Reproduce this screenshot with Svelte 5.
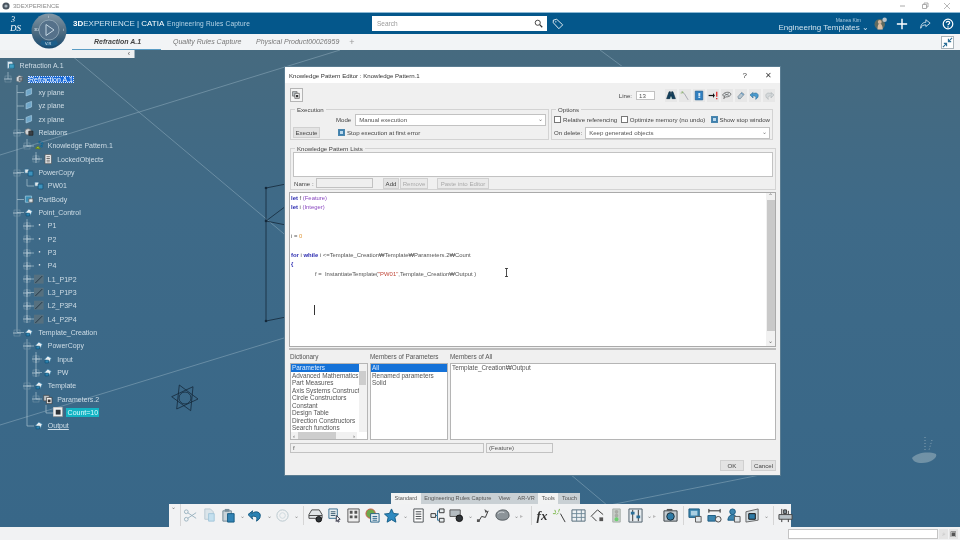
<script>
  // small helper, icons are lists of [path, fill, stroke]
  const circle = (x, y, r) => `M${x - r} ${y}a${r} ${r} 0 1 0 ${r * 2} 0a${r} ${r} 0 1 0 ${-r * 2} 0z`;

  const icons = {
    product: [['M2 2h6l2 2v8H2z', '#dfe8ee', '#5d8aa6'], ['M5 6h7v6H5z', '#3f9fc4', '#18607f']],
    part: [['M2 5l4-3 5 2v5l-4 3-5-2z', '#d8dde0', '#6c7278'], ['M6 5h5v5H6z', '#88939b', '#454c52']],
    plane: [['M3 5l8-3v8l-8 3z', '#6fa6c8', '#a4cbe2']],
    rel: [[circle(6, 7, 4.5), '#d3d6d8', '#777'], ['M7 6h6v6H7z', '#3a4046', '#222']],
    kp: [['M2 12l4-3 3 4z', '#a5c53a', '#5f7c10'], ['M7 2h2v2H7zM11 4h2v2h-2zM10 8h2v2h-2z', '#2d8fc4', '#0d5f8a']],
    doc: [['M3 1h9v13H3z', '#fff', '#555'], ['M5 4h5M5 6.5h5M5 9h5M5 11.5h5', 'none', '#222']],
    copy: [['M1 3h6v6H1z', '#dfe6ea', '#2c6a90'], ['M6 6h7v7H6z', '#3d92bd', '#144f72']],
    body: [['M2 3h9v9H2z', '#3c8fb6', '#a9d4e8'], ['M7 7h6v5H7z', '#e2e6e8', '#555']],
    geo: [['M2 8l5-5 5 3-3 6z', '#e8edf0', '#3b7fa8'], ['M3 9h5v4H3z', '#2d84b1', '#0e5076']],
    dot: [['M7 6h2v2H7z', '#eef2f4', 'none']],
    line: [['M0 1h14v13H0z', '#56707f', 'none'], ['M2 13L12 3', 'none', '#10202c']],
    param: [['M1 2h8v8H1z', '#bfc6ca', '#444'], ['M5 5h8v9H5z', '#eee', '#333'], ['M7 8h4v4H7z', '#333', 'none']],
    count: [['M0 0h14v14H0z', '#eceff0', '#888'], ['M4 4h7v7H4z', '#2d3338', 'none']]
  };

  const tools = {
    scissors: [[circle(3.5, 4, 2) + circle(3.5, 12, 2), 'none', '#9ab2bf'], ['M5 5l9 6M5 11l9-6', 'none', '#9ab2bf']],
    copy: [['M3 1h6l3 3v8H3z', '#dbe5ea', '#b9c9d2'], ['M7 6h6v8H7z', '#c4e0ef', '#a3c6da']],
    paste: [['M2 3h9v11H2z', '#c9d3d9', '#6f8794'], ['M4 1h5v3H4z', '#788e9a', 'none'], ['M7 6h7v9H7z', '#3283b4', '#135980']],
    undo: [['M4 6c5-4 10-1 9 3 0 2-2 4-4 5 1-3 1-6-5-5l1 3-5-5 5-4z', '#2a82b3', '#12567e']],
    gear: [[circle(8, 8, 6), 'none', '#b8c6cd'], [circle(8, 8, 3), 'none', '#ced9de']],
    disk: [['M1 7l3-5h8l3 5v4H1z', '#e1e5e7', '#444'], ['M1 8h14', 'none', '#444'], [circle(11.5, 12, 3), '#2f3438', '#111']],
    listArrow: [['M2 1h9v10H2z', '#e8eef1', '#3b6f90'], ['M4 4h5M4 6h5M4 8h5', 'none', '#34566c'], ['M10 8l4 4-2 .5 1 2-1.2.5-1-2-1 1.4z', '#fff', '#334']],
    grid: [['M2 1h12v14H2z', '#eee', '#555'], ['M4 3h3v3H4zM9 3h3v3H9zM4 8h3v3H4zM9 8h3v3H9z', '#555', 'none']],
    globe: [[circle(6, 6, 5), '#6ea84b', '#d0574a'], ['M6 6h9v9H6z', '#eef2f4', '#1f5e85'], ['M8 9h5M8 11h5M8 13h5', 'none', '#1f5e85']],
    star: [['M8 1l2.2 4.8 5.3.6-3.9 3.5 1.1 5.2L8 12.4 3.3 15.1l1.1-5.2L.5 6.4l5.3-.6z', '#2e8ac0', '#145d86']],
    page: [['M3 1h10v14H3z', '#fff', '#4a4f52'], ['M5 4h6M5 6.5h6M5 9h6M5 11.5h6', 'none', '#3a3f42']],
    tree: [['M10 1h5v4h-5zM1 6h5v4H1zM10 11h5v4h-5z', '#e8edef', '#333'], ['M6 8h2V3h2M8 8v5h2', 'none', '#2a6f98']],
    screenGear: [['M1 2h11v7H1z', '#b4bcc1', '#555'], [circle(11, 11, 3.5), '#2f3438', '#111']],
    poly: [['M3 14l3-5 4 1 3-7', 'none', '#333'], ['M9 1l1 4 3-1zM1 12h3v3H1z', '#555', 'none']],
    sphere: [['M1 8c0-4 4-6 8-6s6 3 6 6-3 5-7 5-7-2-7-5z', '#8c9499', '#4d5459'], ['M3 6c2-2 5-2 7-1', 'none', '#d4d9dc']],
    wand: [['M9 6l5 9', 'none', '#333'], ['M3 2l1 3M8 1L7 4M1 6l3 0M5 7l2-2', 'none', '#7ab648']],
    table: [['M1 2h14v12H1z', '#eef2f4', '#506776'], ['M1 6h14M1 10h14M6 2v12M11 2v12', 'none', '#6d8797']],
    shape: [['M1 9l7-7 6 5', 'none', '#333'], ['M2 9l5 5', 'none', '#333'], ['M10 10h4v4h-4z', '#555', 'none']],
    light: [['M4 1h8v14H4z', '#c8cec9', '#a9b0ab'], [circle(8, 4, 2) + circle(8, 8, 2), '#a9aca6', 'none'], [circle(8, 12, 2.2), '#6ccf70', 'none']],
    slider: [['M1 1h14v14H1z', '#e6ebee', '#4a5c68'], ['M5 2v12M11 2v12', 'none', '#333'], ['M3 4h4v3H3zM9 8h4v3H9z', '#2a6f98', 'none']],
    camera: [['M1 3h14v11H1z', '#c3cbd0', '#3b4145'], [circle(8, 9, 4), '#2f7ba6', '#1a2a33'], ['M4 1h6v2H4z', '#555', 'none']],
    panel: [['M1 1h11v9H1z', '#3c85ae', '#1a5a80'], ['M3 3h7v5H3z', '#a9cfe2', 'none'], ['M8 9h6v6H8z', '#dfe5e8', '#555']],
    measure: [['M2 3h12M2 1v4M14 1v4', 'none', '#222'], ['M1 8h8v6H1z', '#3c85ae', '#1a5a80'], [circle(12, 12, 3), '#eee', '#444']],
    people: [[circle(7, 4, 3), '#3c85ae', '#1a5a80'], ['M2 13c0-4 3-6 5-6s5 2 5 6z', '#3c85ae', '#1a5a80'], ['M9 9h6v6H9z', '#dfe5e8', '#555']],
    frame: [['M1 4l13-3v12L1 15z', '#d5dde1', '#666'], ['M4 6h7v6H4z', '#2f7ba6', '#111']],
    rig: [['M4 1v14M11 3v12', 'none', '#333'], ['M1 7h14v5H1z', '#b9c2c7', '#444'], ['M6 2h3v4H6z', '#7b8a93', '#333']]
  };

  const toolbar = [
    'scissors', 'copy', 'paste', '|caret', 'undo', '|caret', 'gear', '|caret', '|sep',
    'disk', 'listArrow', 'grid', 'globe', 'star', '|caret', 'page', 'tree', 'screenGear', '|caret',
    'poly', 'sphere', '|caret', '|more', '|sep', '|fx', 'wand', 'table', 'shape', 'light', 'slider', '|caret', '|more',
    'camera', '|sep', 'panel', 'measure', 'people', 'frame', '|caret', '|sep', 'rig'
  ];

  const tree = [
    { label: 'Refraction A.1', depth: -1, icon: 'product' },
    { label: 'Refraction A.1', depth: 0, icon: 'part', exp: '-', selected: true },
    { label: 'xy plane', depth: 1, icon: 'plane' },
    { label: 'yz plane', depth: 1, icon: 'plane' },
    { label: 'zx plane', depth: 1, icon: 'plane' },
    { label: 'Relations', depth: 1, icon: 'rel', exp: '-' },
    { label: 'Knowledge Pattern.1', depth: 2, icon: 'kp', exp: '-' },
    { label: 'LockedObjects', depth: 3, icon: 'doc', exp: '+' },
    { label: 'PowerCopy', depth: 1, icon: 'copy', exp: '-' },
    { label: 'PW01', depth: 2, icon: 'copy' },
    { label: 'PartBody', depth: 1, icon: 'body' },
    { label: 'Point_Control', depth: 1, icon: 'geo', exp: '-' },
    { label: 'P1', depth: 2, icon: 'dot', exp: '+' },
    { label: 'P2', depth: 2, icon: 'dot', exp: '+' },
    { label: 'P3', depth: 2, icon: 'dot', exp: '+' },
    { label: 'P4', depth: 2, icon: 'dot', exp: '+' },
    { label: 'L1_P1P2', depth: 2, icon: 'line', exp: '+' },
    { label: 'L3_P1P3', depth: 2, icon: 'line', exp: '+' },
    { label: 'L2_P3P4', depth: 2, icon: 'line', exp: '+' },
    { label: 'L4_P2P4', depth: 2, icon: 'line', exp: '+' },
    { label: 'Template_Creation', depth: 1, icon: 'geo', exp: '-' },
    { label: 'PowerCopy', depth: 2, icon: 'geo', exp: '-' },
    { label: 'Input', depth: 3, icon: 'geo', exp: '+' },
    { label: 'PW', depth: 3, icon: 'geo', exp: '+' },
    { label: 'Template', depth: 2, icon: 'geo', exp: '-' },
    { label: 'Parameters.2', depth: 3, icon: 'param', exp: '-' },
    { label: 'Count=10', depth: 4, icon: 'count', active: true },
    { label: 'Output', depth: 2, icon: 'geo', underline: true }
  ];

  const connectors =
    'M8 72v7 M17 85v247 M17 92.5h7M17 106h7M17 119.5h7M17 132.5h7M17 172.5h7M17 199.5h7M17 212.5h7M17 332.5h7 ' +
    'M27 139v7h7 M27 179v7h7 M27 219v100 M27 226h7M27 239h7M27 253h7M27 266h7M27 279h7M27 292.5h7M27 306h7M27 319h7 ' +
    'M27 339v87h7 M27 346h7M27 386h7 M36 152v7h6 M36 352v20 M36 359h6M36 372.5h6 M36 392v7h6 M46 405v8h7';

  // the list clips these two names in the original, so they are written as shown
  const dictionary = ['Parameters', 'Advanced Mathematics F', 'Part Measures', 'Axis Systems Constructor', 'Circle Constructors', 'Constant', 'Design Table', 'Direction Constructors', 'Search functions'];
  const members = ['All', 'Renamed parameters', 'Solid'];

  const editorTools = [
    [['M1 13l4-11h2l1 5 1-5h2l4 11h-5l-1-4h-2l-1 4z', '#123f5c', '#0d2c40'], ['M7 12h2', 'none', '#3aa']],
    [['M2 2l5 3 6 10', 'none', '#889'], ['M4 1l1 3M1 4h3', 'none', '#7ab648']],
    [['M2 1h12v14H2z', '#2f7fc1', '#1a5a8e'], ['M7 4h3v5H7zM7 10h3v2H7z', '#d7e9f5', 'none']],
    [['M1 7h8v2H1z', '#111', 'none'], ['M8 4l3 4-3 4z', '#111', 'none'], ['M13 2h2v8h-2zM13 12h2v2h-2z', '#d22', 'none']],
    [['M1 7c2-4 10-6 13-2 1 3-4 6-8 5l-3 3 1-4c-2 0-3-1-3-2z', '#e8ecee', '#333'], ['M4 5l7 3M4 8l7-3', 'none', '#555']],
    [['M3 10l6-7 4 3-6 7H4z', '#b7c7d2', '#5e7786'], ['M8 4l4 3', 'none', '#2f7fc1']],
    [['M4 6c5-4 10-1 9 3 0 2-2 4-4 5 1-3 1-6-5-5l1 3-5-5 5-4z', '#4b9bd0', '#2a6f98']],
    [['M12 6C7 2 2 5 3 9c0 2 2 4 4 5-1-3-1-6 5-5l-1 3 5-5-5-4z', '#d4d8da', '#aeb4b7']]
  ];
</script>

{#snippet glyph(parts)}
  <svg class="glyph" viewBox="0 0 16 16">
    {#each parts as p}
      <path d={p[0]} fill={p[1]} stroke={p[2]} stroke-width="1" />
    {/each}
  </svg>
{/snippet}

<div class="app">
  <div class="titlebar">
    <svg class="app-ico" viewBox="0 0 10 10"><circle cx="5" cy="5" r="4.5" fill="#4a5560" /><circle cx="5" cy="5" r="2" fill="#a8b4bc" /></svg>
    <span class="app-name">3DEXPERIENCE</span>
    <div class="win-btns">
      <svg viewBox="0 0 8 8"><path d="M1 4h5" stroke="#aaa" fill="none" /></svg>
      <svg viewBox="0 0 8 8"><path d="M1.5 2.5h4v4h-4zM3 2.5V1h4v4H5.5" stroke="#999" fill="none" stroke-width=".8" /></svg>
      <svg viewBox="0 0 8 8"><path d="M1 1l6 6M7 1L1 7" stroke="#999" fill="none" stroke-width=".7" /></svg>
    </div>
  </div>

  <header class="bar">
    <span class="ds-logo"><span>3</span><span class="ds">DS</span></span>
    <div class="brand"><b>3D</b>EXPERIENCE | <b class="catia">CATIA</b> <span class="app-title">Engineering Rules Capture</span></div>
    <div class="search">
      <span>Search</span>
      <svg viewBox="0 0 12 12"><circle cx="5" cy="5" r="3.4" fill="none" stroke="#333" stroke-width="1.2" /><path d="M7.6 7.6L11 11" stroke="#333" stroke-width="1.6" /></svg>
    </div>
    <svg class="tag" viewBox="0 0 14 14"><path d="M1.5 2.5l4-1 7 6.5-4.5 4.5-6.5-7z" fill="none" stroke="#fff" stroke-width="1" /><circle cx="4.5" cy="4.5" r=".8" fill="#fff" /></svg>
    <div class="user">
      <span class="user-name">Manea Kim</span>
      <span class="user-space">Engineering Templates ⌄</span>
    </div>
    <svg class="avatar" viewBox="0 0 20 20">
      <circle cx="9" cy="11" r="7" fill="#5e6a60" />
      <path d="M6 18c0-5 1-8 3-8s4 3 4 8z" fill="#d8bda2" />
      <circle cx="9" cy="8" r="2.6" fill="#d3b79c" />
      <circle cx="15.5" cy="5" r="3" fill="#b7c3cb" />
    </svg>
    <svg class="act plus" viewBox="0 0 14 14"><path d="M7 1v12M1 7h12" stroke="#fff" stroke-width="1.7" /></svg>
    <svg class="act" viewBox="0 0 14 14"><path d="M8 2l5 4-5 4V8C5 8 3 9 2 12c0-4 2-7 6-7z" fill="none" stroke="#dfe9f0" stroke-width="1" /></svg>
    <svg class="act last" viewBox="0 0 14 14"><circle cx="7" cy="7" r="5.6" fill="none" stroke="#fff" stroke-width="1.4" /><path d="M5 5.5C5 3.5 9 3.5 9 5.5 9 7 7 7 7 8.5" fill="none" stroke="#fff" stroke-width="1.4" /><circle cx="7" cy="10.4" r=".9" fill="#fff" /></svg>
  </header>

  <nav class="tabs">
    <span class="tab active">Refraction A.1</span>
    <span class="tab quality">Quality Rules Capture</span>
    <span class="tab physical">Physical Product00026959</span>
    <span class="tab-add">+</span>
    <span class="collapse">
      <svg viewBox="0 0 12 12"><path d="M11 1L7.5 4.5M7 2v3h3M1 11l3.5-3.5M5 10V7H2" fill="none" stroke="#2b6f97" stroke-width="1.2" /></svg>
    </span>
  </nav>

  <!-- the compass sits over the header and the tab strip -->
  <div class="compass">
    <svg viewBox="0 0 36 36">
      <defs>
        <linearGradient id="ring" x1="0" y1="0" x2="0" y2="1">
          <stop offset="0" stop-color="#8297a6" />
          <stop offset=".55" stop-color="#4c6a80" />
          <stop offset="1" stop-color="#174a70" />
        </linearGradient>
      </defs>
      <circle cx="18" cy="18" r="17.5" fill="url(#ring)" />
      <circle cx="18" cy="17" r="10" fill="#55718a" stroke="#9fb3c1" stroke-width=".7" />
      <path d="M15 11.5l8 5.5-8 5.5z" fill="none" stroke="#c4d6e2" stroke-width="1" />
      <path d="M9 31c5 3 13 3 18 0l-2-4c-4 2-10 2-14 0z" fill="#1d5e8a" />
    </svg>
    <span class="c-t">i</span>
    <span class="c-l">3D</span>
    <span class="c-r">i</span>
    <span class="c-b">V.R</span>
  </div>

  <main class="viewport">
    <svg class="scene" viewBox="0 50 960 478">
      <g stroke="#9db8c8" stroke-width=".6" fill="none" opacity=".75">
        <path d="M0 155L340 50" />
        <path d="M65 50L620 516" />
        <path d="M0 425L284 338" />
        <path d="M600 50L770 176" />
        <path d="M600 507L770 473" />
      </g>
      <g stroke="#14283a" stroke-width=".8" fill="none">
        <path d="M266 188V321" />
        <path d="M266 188L286 184M266 221L286 206M266 221L286 225M266 321L286 317" />
        <path d="M179.3 385L198 399L176.7 409zM193 386.7L190.7 410.7L171.7 396.7z" />
        <circle cx="185" cy="398" r="6" />
      </g>
      <g fill="#14283a"><circle cx="266" cy="188" r="1.3" /><circle cx="266" cy="221" r="1.3" /><circle cx="266" cy="321" r="1.3" /></g>
      <g>
        <path d="M912 458c4-5 16-7 24-4 2 4-6 9-14 9-6 0-9-2-10-5z" fill="#9fb4bf" opacity=".55" />
        <path d="M925 437v14M932 440l-3 10" stroke="#86a2b2" stroke-width="1" stroke-dasharray="1 2" />
      </g>
    </svg>

    <div class="tree-head"><span>‹</span></div>

    <section class="tree">
      <svg class="connectors" viewBox="0 50 140 400"><path d={connectors} fill="none" stroke="#a9c1cf" stroke-width=".7" /></svg>
      {#each tree as node}
        <div class="row" style="margin-left:{4 + 9.4 * node.depth}px">
          <span class="exp">
            {#if node.exp}
              <svg viewBox="0 0 8 8"><path d={node.exp === '+' ? 'M0 4h8M4 0v8' : 'M0 4h8'} stroke="#b6cad6" stroke-width=".9" /><rect x="1" y="1" width="6" height="6" fill="none" stroke="#7f9cad" stroke-width=".5" /></svg>
            {/if}
          </span>
          <span class="ico">{@render glyph(icons[node.icon])}</span>
          <span class="lbl" class:selected={node.selected} class:active={node.active} class:under={node.underline}>{node.label}</span>
        </div>
      {/each}
    </section>

    <section class="dialog">
      <div class="dlg-title">
        <span>Knowledge Pattern Editor : Knowledge Pattern.1</span>
        <span class="q">?</span>
        <span class="x">✕</span>
      </div>

      <div class="dlg-body">
        <div class="top-row">
          <span class="square-btn">{@render glyph(icons.param)}</span>
          <span class="line-lbl">Line:</span>
          <span class="field line-val">13</span>
          <div class="ed-tools">
            {#each editorTools as parts}
              <span>{@render glyph(parts)}</span>
            {/each}
          </div>
        </div>

        <div class="groups">
          <fieldset class="exec">
            <legend>Execution</legend>
            <div class="exec-row mode">
              <span>Mode</span>
              <span class="field select">Manual execution<i>⌄</i></span>
            </div>
            <div class="exec-row">
              <span class="btn">Execute</span>
              <span class="check on"></span>
              <span>Stop execution at first error</span>
            </div>
          </fieldset>
          <fieldset class="opts">
            <legend>Options</legend>
            <div class="opt-row">
              <span class="check"></span><span class="o1">Relative referencing</span>
              <span class="check"></span><span class="o2">Optimize memory (no undo)</span>
              <span class="check on"></span><span>Show stop window</span>
            </div>
            <div class="opt-row del">
              <span>On delete:</span>
              <span class="field select">Keep generated objects<i>⌄</i></span>
            </div>
          </fieldset>
        </div>

        <fieldset class="lists">
          <legend>Knowledge Pattern Lists</legend>
          <div class="field list-box"></div>
          <div class="name-row">
            <span class="name-lbl">Name :</span>
            <span class="field name-in"></span>
            <span class="btn add">Add</span>
            <span class="btn off remove">Remove</span>
            <span class="btn off paste">Paste into Editor</span>
          </div>
        </fieldset>

        <div class="editor">
          <div class="code">
            <div class="ln"><b>let</b> f <em>(Feature)</em></div>
            <div class="ln"><b>let</b> i <em>(Integer)</em></div>
            <div class="ln">&nbsp;</div>
            <div class="ln">&nbsp;</div>
            <div class="ln">i = <u>0</u></div>
            <div class="ln">&nbsp;</div>
            <div class="ln"><b>for</b> i <b>while</b> i &lt;=Template_Creation₩Template₩Parameters.2₩Count</div>
            <div class="ln"><b>{'{'}</b></div>
            <div class="ln ind">f =&nbsp; InstantiateTemplate(<s>"PW01"</s>,Template_Creation₩Output )</div>
            <span class="caret"></span>
            <svg class="ibeam" viewBox="0 0 5 9"><path d="M1 .5h3M1 8.5h3M2.5 .5v8" stroke="#222" stroke-width=".8" fill="none" /></svg>
          </div>
          <div class="vscroll">
            <span class="arr">⌃</span>
            <span class="thumb"></span>
            <span class="arr">⌄</span>
          </div>
        </div>

        <div class="splitter"></div>

        <div class="dict">
          <div class="dcol">
            <span class="cap">Dictionary</span>
            <div class="field dlist">
              <div class="dscroll">
                <div class="items">
                  {#each dictionary as item, i}
                    <div class="item" class:sel={i === 0}>{item}</div>
                  {/each}
                </div>
                <div class="sb-v"><span class="sb-thumb"></span></div>
              </div>
              <div class="sb-h"><span>‹</span><i></i><span>›</span></div>
            </div>
          </div>
          <div class="dcol">
            <span class="cap">Members of Parameters</span>
            <div class="field dlist">
              <div class="items">
                {#each members as item, i}
                  <div class="item" class:sel={i === 0}>{item}</div>
                {/each}
              </div>
            </div>
          </div>
          <div class="dcol">
            <span class="cap">Members of All</span>
            <div class="field dlist">
              <div class="items"><div class="item">Template_Creation₩Output</div></div>
            </div>
          </div>
        </div>

        <div class="type-row">
          <span class="field grey f-in">f</span>
          <span class="field grey f-type">(Feature)</span>
        </div>

        <div class="foot">
          <span class="btn ok">OK</span>
          <span class="btn cancel">Cancel</span>
        </div>
      </div>
    </section>

    <div class="dock">
      <div class="dock-tabs">
        <span class="on">Standard</span>
        <span>Engineering Rules Capture</span>
        <span>View</span>
        <span>AR-VR</span>
        <span class="on">Tools</span>
        <span>Touch</span>
      </div>
      <div class="dock-bar">
        <span class="grip">⌄</span>
        {#each toolbar as t}
          {#if t === '|caret'}
            <span class="t-caret">⌄</span>
          {:else if t === '|sep'}
            <span class="t-sep"></span>
          {:else if t === '|more'}
            <span class="t-more">▸</span>
          {:else if t === '|fx'}
            <span class="t-fx">fx</span>
          {:else}
            <span class="t-ico">{@render glyph(tools[t])}</span>
          {/if}
        {/each}
      </div>
    </div>
  </main>

  <footer class="status">
    <span class="cmd"></span>
    <span class="cmd-btn">⌕</span>
    <span class="cmd-btn dark">▣</span>
  </footer>
</div>

<style>
  :global(body) {
    margin: 0;
    background: #3f6a85;
  }

  .app {
    position: relative;
    width: 960px;
    height: 540px;
    display: flex;
    flex-direction: column;
    overflow: hidden;
    font-family: "Liberation Sans", Arial, sans-serif;
    filter: blur(0.3px);
  }

  .titlebar {
    height: 12px;
    background: #fff;
    display: flex;
    align-items: center;
    padding-left: 2px;
    border-bottom: 1px solid #8db9d4;
  }

  .app-ico {
    width: 8px;
    height: 8px;
  }

  .app-name {
    margin-left: 3px;
    font-size: 6px;
    color: #8a8a8a;
  }

  .win-btns {
    margin-left: auto;
    display: flex;
    gap: 14px;
    padding-right: 9px;
  }

  .win-btns svg {
    width: 8px;
    height: 8px;
  }

  .bar {
    height: 21px;
    background: #04578b;
    display: flex;
    align-items: center;
    color: #fff;
  }

  .ds-logo {
    width: 73px;
    padding-left: 11px;
    box-sizing: border-box;
    display: flex;
    flex-direction: column;
    font: italic 8px/8px "Liberation Serif", serif;
  }

  .ds {
    margin-left: -1px;
    font-size: 9px;
  }

  .brand {
    width: 299px;
    font-size: 8px;
    color: #cfe2ee;
    white-space: nowrap;
  }

  .brand b {
    color: #fff;
  }

  .brand .catia {
    font-weight: 400;
  }

  .app-title {
    font-size: 6.6px;
    color: #b7d4e6;
    margin-left: 1px;
    letter-spacing: 0.15px;
  }

  .search {
    width: 175px;
    height: 15px;
    background: #fff;
    display: flex;
    align-items: center;
    justify-content: space-between;
    padding: 0 4px 0 5px;
    box-sizing: border-box;
    font-size: 6.5px;
    color: #9a9a9a;
  }

  .search svg {
    width: 9px;
    height: 9px;
  }

  .tag {
    width: 12px;
    height: 12px;
    margin-left: 5px;
  }

  .user {
    margin-left: auto;
    display: flex;
    flex-direction: column;
    align-items: flex-end;
    line-height: 8px;
  }

  .user-name {
    font-size: 5px;
    color: #a8c8dc;
    margin-right: 8px;
  }

  .user-space {
    font-size: 8px;
    color: #cfe2ee;
  }

  .avatar {
    width: 15px;
    height: 15px;
    margin-left: 4px;
  }

  .act {
    width: 12px;
    height: 12px;
    margin-left: 11px;
  }

  .act.plus {
    margin-left: 8px;
  }

  .act.last {
    margin-right: 6px;
  }

  .tabs {
    height: 16px;
    background: #f2f4f6;
    position: relative;
    display: flex;
    align-items: center;
    font-size: 7px;
    font-style: italic;
    color: #777;
    white-space: nowrap;
  }

  .tab {
    height: 16px;
    line-height: 15px;
    box-sizing: border-box;
  }

  .tab.active {
    margin-left: 72px;
    width: 89px;
    padding-left: 22px;
    font-weight: 700;
    color: #444;
    border-bottom: 1.5px solid #5a9cc4;
  }

  .tab.quality {
    margin-left: 12px;
    width: 83px;
  }

  .tab-add {
    margin-left: 10px;
    font-size: 9px;
    font-style: normal;
    color: #999;
  }

  .collapse {
    margin-left: auto;
    margin-right: 6px;
    width: 11px;
    height: 11px;
    border: 1px solid #a9b4ba;
    background: #fff;
    display: flex;
  }

  .compass {
    position: absolute;
    left: 31px;
    top: 13px;
    width: 36px;
    height: 36px;
    font-size: 4px;
    color: #dde8ef;
    line-height: 4px;
  }

  .compass svg {
    display: block;
    width: 36px;
    height: 36px;
  }

  .c-t, .c-l, .c-r, .c-b {
    position: absolute;
  }

  .c-t { left: 17px; top: 2px; }
  .c-l { left: 3px; top: 15px; }
  .c-r { right: 3px; top: 15px; }
  .c-b { left: 14px; top: 29px; }

  .viewport {
    position: relative;
    flex: 1;
    background: linear-gradient(#466a7f, #3e6a88 35%, #386788);
  }

  .scene {
    position: absolute;
    inset: 0;
    width: 960px;
    height: 478px;
  }

  .tree-head {
    position: absolute;
    left: 0;
    top: 0;
    width: 134px;
    height: 8px;
    background: #eef0f1;
    text-align: right;
    font-size: 7px;
    line-height: 8px;
    color: #555;
    border-right: 1px solid #9fb0ba;
  }

  .tree-head span {
    margin-right: 4px;
  }

  .tree {
    position: absolute;
    left: 0;
    top: 9.3px;
    width: 140px;
    color: #cfdde6;
    font-size: 7px;
  }

  .connectors {
    position: absolute;
    left: 0;
    top: -9.3px;
    width: 140px;
    height: 400px;
  }

  .row {
    position: relative;
    height: 13.33px;
    display: flex;
    align-items: center;
    white-space: nowrap;
  }

  .exp {
    width: 8px;
    height: 8px;
    margin-right: 3px;
    flex: none;
  }

  .exp svg {
    display: block;
    width: 8px;
    height: 8px;
  }

  .ico {
    width: 11px;
    height: 11px;
    flex: none;
    margin-right: 2px;
  }

  .glyph {
    display: block;
    width: 100%;
    height: 100%;
  }

  .lbl {
    padding: 0 1px;
  }

  .lbl.selected {
    background: #1467d6;
    color: #fff;
    outline: 1px dotted #d8e6ff;
    outline-offset: -1px;
  }

  .lbl.active {
    background: #14b4c4;
    color: #d9fbff;
    padding: 1px 1px 1px 2px;
  }

  .lbl.under {
    text-decoration: underline;
  }

  .dialog {
    position: absolute;
    left: 285px;
    top: 17px;
    width: 495px;
    height: 408px;
    background: #f0f0f0;
    box-shadow: 0 0 0 1px #5b7d92;
    display: flex;
    flex-direction: column;
    color: #444;
    font-size: 6.1px;
  }

  .dlg-title {
    height: 16px;
    background: #fff;
    display: flex;
    align-items: center;
    padding-left: 4px;
    font-size: 6.1px;
    color: #333;
  }

  .q {
    margin-left: auto;
    font-size: 8px;
  }

  .x {
    margin: 0 8px 0 18px;
    font-size: 7.5px;
    color: #444;
  }

  .dlg-body {
    flex: 1;
    padding: 0 4px 0 5px;
    position: relative;
  }

  .top-row {
    height: 24px;
    display: flex;
    align-items: center;
  }

  .square-btn {
    width: 13px;
    height: 14px;
    border: 1px solid #b5b5b5;
    box-sizing: border-box;
    background: #f5f5f5;
    padding: 1px;
  }

  .line-lbl {
    margin-left: auto;
    margin-right: 4px;
  }

  .line-val {
    width: 19px;
    height: 9px;
    line-height: 8px;
    padding-left: 2px;
    box-sizing: content-box;
    margin-right: 10px;
  }

  .ed-tools {
    display: flex;
    margin-right: -1px;
    margin-top: 1px;
  }

  .ed-tools span {
    width: 12px;
    height: 13px;
    padding: 1px 1px;
    box-sizing: border-box;
    margin-right: 2px;
    background: #e7e7e7;
  }

  .field {
    background: #fff;
    border: 1px solid #c2c2c2;
    box-sizing: border-box;
    display: block;
    color: #555;
  }

  .field.grey {
    background: #f0f0f0;
  }

  .select {
    flex: 1;
    height: 12px;
    line-height: 10px;
    padding-left: 3px;
    position: relative;
  }

  .select i {
    position: absolute;
    right: 2px;
    top: -1px;
    font-style: normal;
    color: #777;
  }

  fieldset {
    margin: 0;
    padding: 1px 2px 0;
    border: 1px solid #d3d3d3;
    min-width: 0;
  }

  legend {
    padding: 0 2px;
    margin-left: 2px;
    font-size: 6.1px;
    line-height: 5px;
  }

  .groups {
    display: flex;
    gap: 2px;
    height: 33px;
  }

  .exec {
    width: 259px;
    box-sizing: border-box;
  }

  .opts {
    width: 222px;
    box-sizing: border-box;
  }

  .exec-row {
    display: flex;
    align-items: center;
    height: 13px;
    white-space: nowrap;
  }

  .exec-row.mode {
    padding-left: 43px;
    gap: 4px;
  }

  .exec-row .btn {
    width: 27px;
    margin-right: 18px;
  }

  .btn {
    display: inline-block;
    height: 11px;
    line-height: 10px;
    background: #e3e3e3;
    border: 1px solid #d0d0d0;
    box-sizing: border-box;
    text-align: center;
    color: #444;
    white-space: nowrap;
  }

  .btn.off {
    background: #eaeaea;
    color: #aaa;
  }

  .check {
    display: inline-block;
    width: 5px;
    height: 5px;
    border: 1px solid #777;
    background: #fff;
    margin-right: 2px;
    flex: none;
  }

  .check.on {
    background: #bcd9ec;
    border-color: #4a86ad;
    box-shadow: inset 0 0 0 1px #3e7fae;
  }

  .opt-row {
    display: flex;
    align-items: center;
    height: 13px;
    white-space: nowrap;
  }

  .o1 {
    width: 58px;
  }

  .o2 {
    width: 81px;
  }

  .opt-row.del {
    gap: 3px;
  }

  .lists {
    margin-top: 6px;
    height: 44px;
    box-sizing: border-box;
    width: 486px;
    padding: 0 2px;
  }

  .list-box {
    height: 25px;
    margin-top: 1px;
  }

  .name-row {
    display: flex;
    align-items: center;
    height: 12px;
  }

  .name-lbl {
    width: 23px;
    padding-left: 1px;
    box-sizing: border-box;
  }

  .name-in {
    width: 57px;
    height: 10px;
    background: #efefef;
  }

  .add {
    width: 16px;
    margin-left: 10px;
  }

  .remove {
    width: 28px;
    margin-left: 1px;
  }

  .paste {
    width: 52px;
    margin-left: 9px;
  }

  .editor {
    margin-top: 2px;
    height: 155px;
    width: 487px;
    margin-left: -1px;
    background: #fff;
    border: 1px solid #aaa;
    box-sizing: border-box;
    display: flex;
  }

  .code {
    position: relative;
    flex: 1;
    padding: 0.5px 0 0 1px;
    font-size: 5.9px;
    line-height: 9.5px;
    color: #555;
    font-family: "Liberation Sans", "Noto Sans CJK KR", sans-serif;
  }

  .ln {
    height: 9.5px;
    white-space: pre;
  }

  .code b {
    color: #2b2bb0;
  }

  .code em {
    color: #8a48c0;
    font-style: normal;
  }

  .code u {
    color: #e0983a;
    text-decoration: none;
  }

  .code s {
    color: #c0483a;
    text-decoration: none;
  }

  .ind {
    padding-left: 24px;
  }

  .caret {
    position: absolute;
    left: 24px;
    top: 112px;
    width: 1px;
    height: 10px;
    background: #333;
  }

  .ibeam {
    position: absolute;
    left: 214px;
    top: 75px;
    width: 5px;
    height: 9px;
  }

  .vscroll {
    width: 9px;
    background: #f1f1f1;
    display: flex;
    flex-direction: column;
    align-items: center;
    color: #666;
    font-size: 6px;
  }

  .arr {
    height: 7px;
    line-height: 7px;
  }

  .thumb {
    width: 8px;
    height: 131px;
    background: #c9c9c9;
    margin-bottom: 7px;
  }

  .splitter {
    height: 2px;
    background: #bdbdbd;
    margin: 1px -1px 0 -1px;
    width: 487px;
  }

  .dict {
    margin-top: 3px;
    display: grid;
    grid-template-columns: 78px 78px 326px;
    gap: 2px;
    font-size: 6.4px;
  }

  .dcol {
    display: flex;
    flex-direction: column;
  }

  .cap {
    height: 8px;
    line-height: 8px;
    color: #555;
    white-space: nowrap;
  }

  .dlist {
    height: 77px;
    margin-top: 2px;
    display: flex;
    flex-direction: column;
    border-color: #b5b5b5;
    overflow: hidden;
  }

  .dscroll {
    display: flex;
    flex: 1;
    min-height: 0;
  }

  .items {
    flex: 1;
    min-width: 0;
  }

  .item {
    height: 7.5px;
    line-height: 7.5px;
    white-space: nowrap;
    padding-left: 1px;
    color: #555;
  }

  .item.sel {
    background: #1572d8;
    color: #dcecff;
  }

  .sb-v {
    width: 8px;
    background: #f1f1f1;
    flex: none;
    padding-top: 7px;
  }

  .sb-thumb {
    display: block;
    width: 7px;
    height: 14px;
    background: #cdcdcd;
  }

  .sb-h {
    height: 7px;
    background: #f1f1f1;
    display: flex;
    align-items: center;
    color: #555;
    font-size: 6px;
    padding: 0 2px;
    justify-content: space-between;
    margin-right: 10px;
  }

  .sb-h i {
    display: block;
    width: 38px;
    height: 7px;
    background: #cdcdcd;
    margin-right: 14px;
  }

  .type-row {
    display: flex;
    gap: 2px;
    margin-top: 3px;
  }

  .f-in {
    width: 194px;
    height: 10px;
    line-height: 8px;
    padding-left: 2px;
  }

  .f-type {
    width: 67px;
    height: 10px;
    line-height: 8px;
    padding-left: 2px;
  }

  .foot {
    display: flex;
    justify-content: flex-end;
    gap: 7px;
    margin-top: 7px;
  }

  .ok {
    width: 24px;
  }

  .cancel {
    width: 25px;
  }

  .dock {
    position: absolute;
    left: 169px;
    bottom: 0;
    width: 622px;
  }

  .dock-tabs {
    display: flex;
    padding-left: 222px;
    height: 11px;
    font-size: 5.6px;
    color: #555;
    white-space: nowrap;
  }

  .dock-tabs span {
    padding: 0 3.5px;
    line-height: 11px;
    background: #c9d0d4;
  }

  .dock-tabs .on {
    background: #f2f3f3;
  }

  .dock-bar {
    height: 23px;
    background: #f1f2f3;
    display: flex;
    align-items: center;
    padding-left: 2px;
    box-sizing: border-box;
  }

  .grip {
    width: 9px;
    font-size: 6px;
    color: #777;
    align-self: flex-start;
    border-right: 1px solid #d5d5d5;
    height: 22px;
    line-height: 7px;
    flex: none;
  }

  .t-ico {
    width: 15px;
    height: 15px;
    margin: 0 2px;
    flex: none;
  }

  .t-caret {
    width: 8px;
    font-size: 6px;
    color: #888;
    text-align: center;
    flex: none;
  }

  .t-more {
    width: 8px;
    font-size: 6px;
    color: #bbb;
    flex: none;
  }

  .t-sep {
    width: 1px;
    height: 19px;
    margin: 0 2.5px;
    background: #d5d5d5;
    flex: none;
  }

  .t-fx {
    width: 16px;
    text-align: center;
    font: italic 700 13px "Liberation Serif", serif;
    color: #333;
    flex: none;
  }

  .status {
    height: 13px;
    background: #f1f2f3;
    display: flex;
    align-items: center;
    justify-content: flex-end;
    padding-right: 2px;
  }

  .cmd {
    width: 150px;
    height: 10px;
    background: #fff;
    border: 1px solid #c4c4c4;
    box-sizing: border-box;
  }

  .cmd-btn {
    width: 9px;
    height: 10px;
    line-height: 9px;
    margin-left: 1px;
    background: #e4e4e4;
    font-size: 7px;
    text-align: center;
    color: #bbb;
  }

  .cmd-btn.dark {
    color: #555;
  }
</style>
